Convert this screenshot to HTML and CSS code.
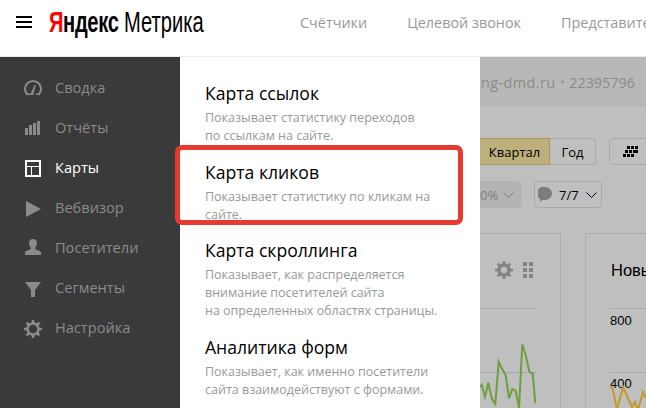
FILE: index.html
```html
<!DOCTYPE html>
<html lang="ru">
<head>
    <meta charset="UTF-8">
    <meta name="viewport" content="width=device-width, initial-scale=1.0">
    <title>Яндекс Метрика</title>
    <link rel="stylesheet" href="styles.css">
</head>
<body>
    <header class="topbar">
        <div class="burger"><span></span><span></span><span></span></div>
        <div class="logo"><div class="logo-text"><span class="logo-brand"><span class="logo-red">Я</span>ндекс</span> <span class="logo-name">Метрика</span></div></div>
        <nav class="topnav">
            <span>Счётчики</span>
            <span>Целевой звонок</span>
            <span>Представители</span>
        </nav>
    </header>

    <div class="main">
        <aside class="sidebar">
            <div class="side-item">
                <svg class="side-icon" viewBox="0 0 18 18"><path d="M3.200 16.500A8 8 0 1 1 14.800 16.500" fill="none" stroke="currentColor" stroke-width="2"/><path d="M2 15.500H6.800L10.500 7 11.800 7.500 9.500 15.500V17H2ZM12 15.500h4V17h-4Z" fill="currentColor"/></svg>
                <span>Сводка</span>
            </div>
            <div class="side-item">
                <svg class="side-icon" viewBox="0 0 18 18"><path d="M1 10h3v7H1zM5 7h3v10H5zM9 5h3v12H9zM13 3h3v14h-3z" fill="currentColor"/></svg>
                <span>Отчёты</span>
            </div>
            <div class="side-item active">
                <svg class="side-icon" viewBox="0 0 18 18"><path d="M2 3h14v15H2z" fill="none" stroke="currentColor" stroke-width="2"/><path d="M2 8.500h14M7.500 8.500v9" fill="none" stroke="currentColor"/></svg>
                <span>Карты</span>
            </div>
            <div class="side-item">
                <svg class="side-icon" viewBox="0 0 18 18"><path d="M2 3l15 8-15 8z" fill="currentColor"/></svg>
                <span>Вебвизор</span>
            </div>
            <div class="side-item">
                <svg class="side-icon" viewBox="0 0 18 18"><path d="M9 1c2.600 0 4 1.800 4 4.200 0 2.200-1 3.700-1.700 4.500-.4.700 0 1.500 1.200 2 2 .8 4 1.300 4.500 2.300V17H1v-3c.5-1 2.500-1.500 4.500-2.300 1.200-.5 1.600-1.300 1.200-2C6 8.900 5 7.400 5 5.200 5 2.800 6.400 1 9 1z" fill="currentColor"/></svg>
                <span>Посетители</span>
            </div>
            <div class="side-item">
                <svg class="side-icon" viewBox="0 0 18 18"><path d="M1 4h16l-6 8v7H7v-7z" fill="currentColor"/></svg>
                <span>Сегменты</span>
            </div>
            <div class="side-item">
                <svg class="side-icon" viewBox="0 0 18 18"><g transform="translate(0 2)"><circle cx="9" cy="9" r="5.500" fill="none" stroke="currentColor" stroke-width="2.600"/><path d="M9 0v3M9 15v3M0 9h3M15 9h3M2.600 2.600l2.100 2.100M13.300 13.300l2.100 2.100M2.600 15.400l2.100-2.100M13.300 4.700l2.100-2.100" stroke="currentColor" stroke-width="2.600"/></g></svg>
                <span>Настройка</span>
            </div>
        </aside>

        <section class="panel">
            <div class="panel-item">
                <h3>Карта ссылок</h3>
                <p>Показывает статистику переходов<br>по ссылкам на сайте.</p>
            </div>
            <div class="panel-item marked">
                <h3>Карта кликов</h3>
                <p>Показывает статистику по кликам на<br>сайте.</p>
            </div>
            <div class="panel-item">
                <h3>Карта скроллинга</h3>
                <p>Показывает, как распределяется<br>внимание посетителей сайта<br>на определенных областях страницы.</p>
            </div>
            <div class="panel-item">
                <h3>Аналитика форм</h3>
                <p>Показывает, как именно посетители<br>сайта взаимодействуют с формами.</p>
            </div>
        </section>

        <section class="content">
            <div class="site-bar"><span class="site-name">ing-dmd.ru</span><span class="dot">•</span><span>22395796</span></div>

            <div class="tool-row">
                <div class="period">
                    <span class="period-btn selected">Квартал</span>
                    <span class="period-btn">Год</span>
                </div>
                <span class="grid-btn">
                    <svg width="15" height="11" viewBox="0 0 15 11"><path d="M4 0h3v3H4zM8 0h3v3H8zM12 0h3v3h-3zM2 4h3v3H2zM6 4h3v3H6zM10 4h3v3h-3zM12 4h3v3h-3zM0 8h3v3H0zM4 8h3v3H4zM8 8h3v3H8z" fill="#000"/></svg>
                </span>
            </div>

            <div class="tool-row second">
                <span class="percent-btn">0%<svg class="chevron light" viewBox="0 0 11 6"><path d="M.5.5l5 5 5-5" fill="none" stroke="currentColor"/></svg></span>
                <span class="notes-btn">
                    <svg width="14" height="15" viewBox="0 0 14 15"><path d="M7 0a7 6.500 0 0 1 0 13H4L2 15v-3.200A6.500 6.500 0 0 1 7 0z" fill="#7c7c7c"/></svg>
                    <span>7/7</span>
                    <svg class="chevron" viewBox="0 0 11 6"><path d="M.5.5l5 5 5-5" fill="none" stroke="currentColor"/></svg>
                </span>
            </div>

            <div class="cards">
                <div class="card card-left">
                    <div class="card-tools">
                        <svg width="18" height="18" viewBox="0 0 18 18"><circle cx="9" cy="9" r="5" fill="none" stroke="#858585" stroke-width="3.600"/><path d="M9 0v3M9 15v3M0 9h3M15 9h3M2.600 2.600l2.100 2.100M13.300 13.300l2.100 2.100M2.600 15.400l2.100-2.100M13.300 4.700l2.100-2.100" stroke="#858585" stroke-width="2.600"/></svg>
                        <svg width="10" height="16" viewBox="0 0 10 16"><path d="M0 0h4v4H0zM6 0h4v4H6zM0 6h4v4H0zM6 6h4v4H6zM0 12h4v4H0zM6 12h4v4H6z" fill="#858585"/></svg>
                    </div>
                    <div class="chart">
                        <div class="grid-line"></div>
                        <div class="grid-line"></div>
                        <svg class="plot" viewBox="0 0 56 100"><path d="M0 14.700L1.700 13 5 24.700 8.300 10.700 11.700 26.300 15.300 32 18.700-10.300 21.700-3.700 25.700 3 29 26.300 32.300 17 35.700 19 39 36 42.300-27.700 45.700-17 49.300-.3 52.700 1.700 55.300 31.300" fill="none" stroke="#6f9e3c" stroke-width="2"/></svg>
                    </div>
                </div>
                <div class="card card-right">
                    <h4>Новые</h4>
                    <div class="chart">
                        <div class="grid-line"><span>800</span></div>
                        <div class="grid-line"><span>400</span></div>
                        <svg class="plot" viewBox="0 0 36 100"><path d="M0 13L3 18 7 38 13 15 18 26 22 35 25 30 28 38 33 20 36 26" fill="none" stroke="#c39a2a" stroke-width="2"/></svg>
                    </div>
                </div>
            </div>
        </section>
    </div>
</body>
</html>
```

FILE: styles.css
```css
* {
    box-sizing: border-box;
}
html, body {
    height: 100%;
}
body {
    margin: 0;
    overflow: hidden;
    font-family: "Open Sans", "Noto Sans", sans-serif;
    background-color: #fff;
}

/* top bar */
.topbar {
    display: flex;
    align-items: center;
    height: 57px;
    padding: 0 0 12px 16px;
    border-bottom: 1px solid #ececec;
    white-space: nowrap;
    overflow: hidden;
}
.burger {
    display: flex;
    flex: none;
    flex-direction: column;
    gap: 3px;
    width: 16px;
}
.burger span {
    display: block;
    height: 2px;
    background-color: #000;
}
.logo {
    flex: none;
    width: 251px;
    margin-left: 17px;
    font-family: "Liberation Sans", sans-serif;
    font-size: 30px;
    color: #000;
}
/* no condensed font here, so the logo text gets squeezed */
.logo-text {
    transform: scaleX(0.67);
    transform-origin: left center;
}
.logo-brand {
    font-weight: bold;
    letter-spacing: -0.5px;
}
.logo-red {
    color: #f00;
}
.topnav {
    display: flex;
    flex: none;
    gap: 40px;
    font-size: 14.4px;
    color: #999;
}

.main {
    display: flex;
    height: 351px;
}

/* left menu */
.sidebar {
    width: 180px;
    padding-top: 10px;
    background-color: #3a3a3a;
}
.side-item {
    display: flex;
    align-items: center;
    gap: 13px;
    height: 40px;
    padding-left: 24px;
    font-size: 14.6px;
    color: #8b8b8b;
}
.side-item.active {
    color: #fff;
}
.side-icon {
    width: 18px;
    height: 18px;
    overflow: visible;
}

/* maps dropdown */
.panel {
    width: 300px;
    padding: 24px 0 0 25px;
    background-color: #fff;
}
.panel-item {
    position: relative;
    margin-bottom: 15px;
}
.panel-item.marked {
    margin-bottom: 14px;
}
.panel-item h3 {
    margin: 0 0 4px;
    font-size: 17.600px;
    line-height: 24px;
    font-weight: 400;
    color: #000;
}
.panel-item p {
    margin: 0;
    font-size: 12.500px;
    line-height: 18px;
    color: #999;
}
.panel-item.marked::after {
    content: "";
    position: absolute;
    left: -30px;
    top: -15px;
    box-sizing: border-box;
    width: 288px;
    height: 80px;
    border: 5px solid #e53a2f;
    border-radius: 7px;
}

/* page behind the dropdown */
.content {
    flex: 1;
    min-width: 0;
    overflow: hidden;
    background-color: #bfbfbf;
}
.site-bar {
    display: flex;
    justify-content: flex-end;
    align-items: center;
    gap: 5px;
    height: 50px;
    padding: 0 11px 0 0;
    font-size: 14.400px;
    color: #8a8a8a;
    background-color: #b8b8b8;
    white-space: nowrap;
}
.site-name {
    flex: none;
    letter-spacing: 0.4px;
}
.dot {
    font-size: 10px;
}
.tool-row {
    display: flex;
    height: 27px;
    margin-top: 31px;
    font-size: 13px;
    color: #000;
}
.tool-row.second {
    margin-top: 16px;
}
.period {
    display: flex;
    flex: none;
    width: 116px;
    border: 1px solid #aaa;
    border-left: 0;
    border-radius: 0 4px 4px 0;
}
.period-btn {
    display: flex;
    align-items: center;
    justify-content: center;
    flex: 1;
}
.period-btn.selected {
    flex: none;
    width: 70px;
    margin: -1px 0;
    background-color: #bdb07d;
    border: 1px solid #a8975a;
    border-left: 0;
}
.grid-btn {
    display: flex;
    flex: none;
    align-items: center;
    width: 60px;
    margin-left: 13px;
    padding-left: 13px;
    border: 1px solid #aaa;
    border-radius: 4px;
}
.percent-btn {
    display: flex;
    flex: none;
    align-items: center;
    gap: 5px;
    width: 42px;
    border-radius: 0 4px 4px 0;
    color: #808080;
    background-color: #b3b3b3;
}
.notes-btn {
    display: flex;
    flex: none;
    align-items: center;
    gap: 7px;
    width: 68px;
    margin-left: 12px;
    padding-left: 3px;
    border: 1px solid #aaa;
    border-radius: 4px;
}
.chevron {
    width: 11px;
    height: 6px;
}
.chevron.light {
    color: #808080;
}
.cards {
    display: flex;
    gap: 24px;
    margin-top: 25px;
}
.card {
    height: 200px;
    border: 1px solid #acacac;
    flex: none;
}
.card-left {
    width: 81px;
    border-left: 0;
}
.card-right {
    width: 100px;
    padding-left: 25px;
}
.card-tools {
    display: flex;
    align-items: center;
    gap: 10px;
    height: 20px;
    margin: 26px 0 0 15px;
}
.card h4 {
    margin: 25px 0 0;
    height: 21px;
    font-family: "Liberation Sans", Arial, sans-serif;
    font-size: 16.500px;
    line-height: 22px;
    font-weight: 400;
    color: #000;
}
.chart {
    position: relative;
    margin-top: 28px;
}
.card-left .chart {
    width: 56px;
}
.card-right .chart {
    margin-left: -1px;
}
.grid-line {
    height: 64px;
    border-top: 1px solid #acacac;
    font-family: "Liberation Sans", Arial, sans-serif;
    font-size: 13px;
    line-height: 22px;
    color: #000;
}
.grid-line:first-child {
    line-height: 24px;
}
.plot {
    position: absolute;
    left: 0;
    top: 64px;
    height: 100px;
    overflow: visible;
}
.card-left .plot {
    width: 56px;
}
.card-right .plot {
    width: 36px;
}
```
